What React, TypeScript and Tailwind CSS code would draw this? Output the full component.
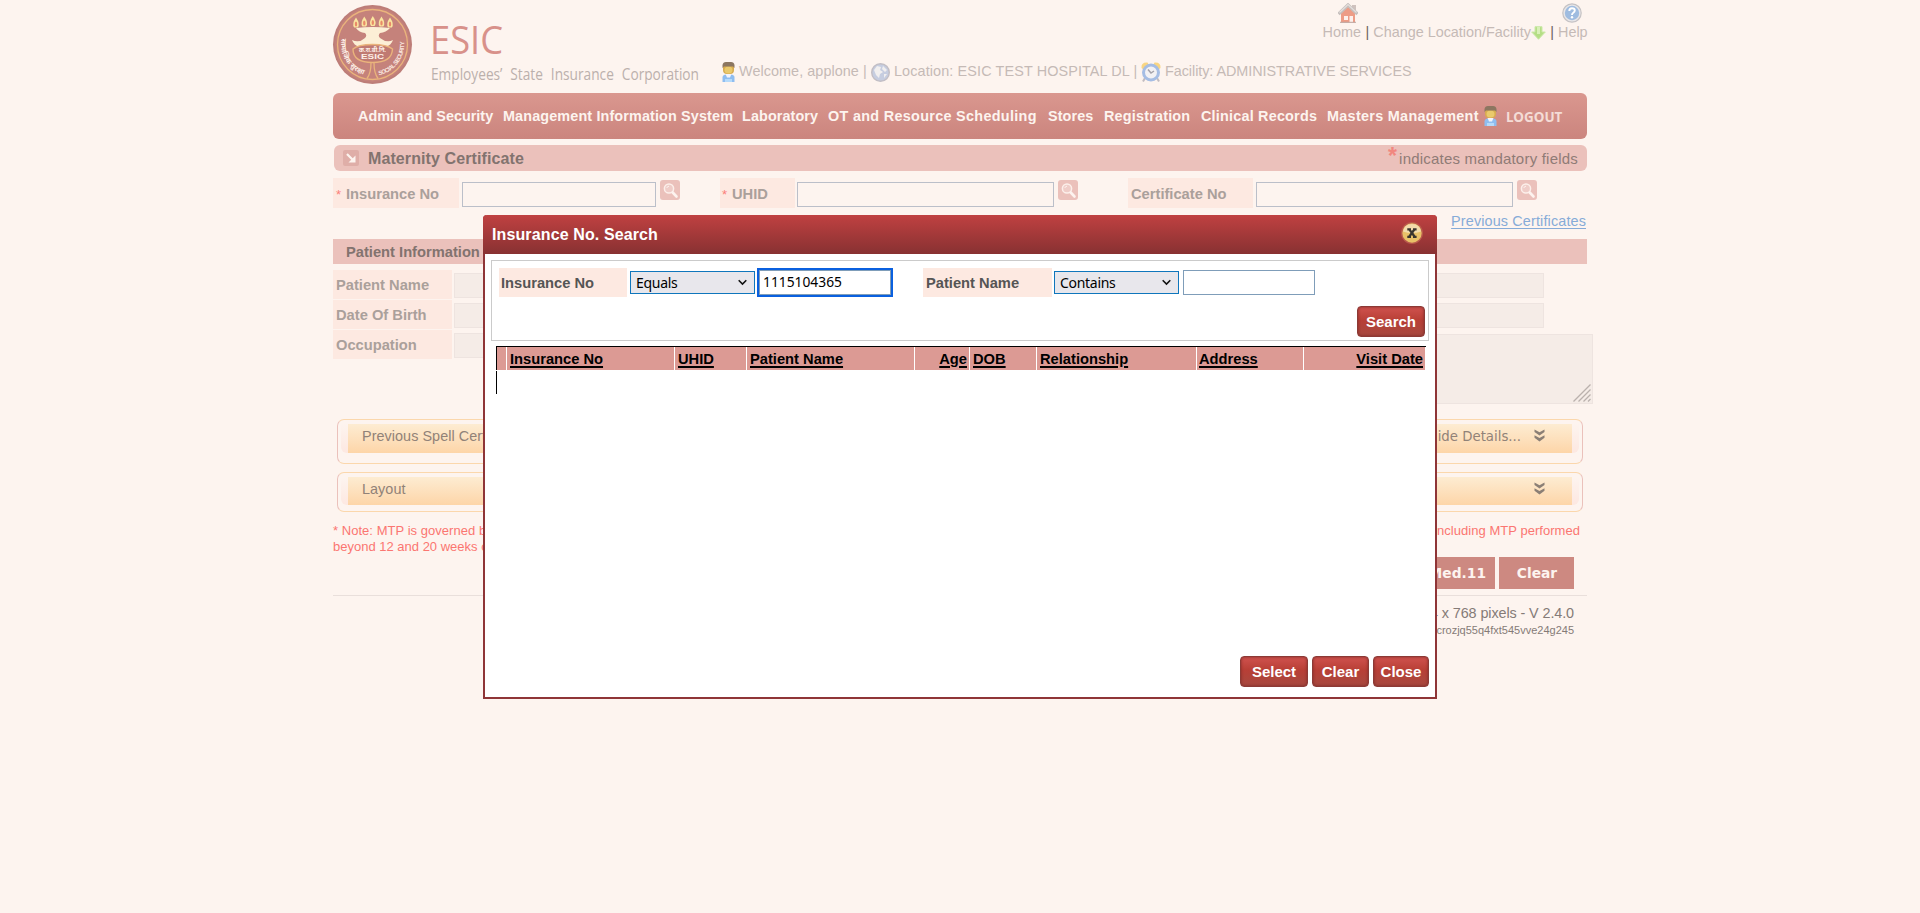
import React from "react";

const arial = "font-['Liberation_Sans',Arial,sans-serif]";
const tahoma = "font-['Noto_Sans',sans-serif]";
const verdana = "font-['DejaVu_Sans',sans-serif]";

function Logo() {
  return (
    <svg className="block h-[93px] w-[380px] shrink-0 overflow-visible" viewBox="0 0 380 93">
      <defs>
        <path id="arcLeft" d="M9 37.500 A31.300 31.300 0 0 0 35 75.500" />
        <path id="arcRight" d="M45 75.300 A31.300 31.300 0 0 0 70.500 38" />
      </defs>
      <circle cx="39.5" cy="44.5" r="39.5" fill="#bd7d78" />
      <circle cx="39.5" cy="44.5" r="37.5" fill="#c5827b" />
      <circle cx="39.5" cy="44.5" r="35" fill="none" stroke="#eab47c" strokeWidth="1.3" />
      {[23, 31.3, 39.8, 48.5, 57].map((x, i) => {
        const y = [23, 22, 21.5, 22, 23][i];
        return (
          <g key={x}>
            <path d={`M${x} ${y - 5.5} Q${x + 4.5} ${y + 1} ${x + 1.8} ${y + 4.5} H${x - 1.8} Q${x - 4.5} ${y + 1} ${x} ${y - 5.5}Z`} fill="#fae49f" />
            <ellipse cx={x} cy={y + 1} rx="1.2" ry="2.6" fill="#e98a68" />
          </g>
        );
      })}
      <path d="M23 28 Q39.5 26 57 28 Q53 32.500 47 33 Q44.500 35.500 47 38 Q54 43.500 60 40 Q58 45.500 53 46.500 Q39.5 42 26 46.500 Q21 45.500 19 40 Q26 43.500 32 38 Q34.500 35.500 32 33 Q26 32.500 23 28Z" fill="#fcefd6" />
      <path d="M20 49 Q20 62.500 39.500 62.500 Q59 62.500 59.500 49 Q54 44.500 39.5 44.500 Q25 44.500 20 49Z" fill="#c07a72" stroke="#eab47c" strokeWidth="1.4" />
      <path d="M38 63 Q38 73 34 78.500 M41 63 Q41 73 45 78.500" fill="none" stroke="#eab47c" strokeWidth="1.3" />
      <text x="26" y="52" fontSize="5.500" fontWeight="700" fill="#fdf0e8" textLength="27" lengthAdjust="spacingAndGlyphs" fontFamily="Noto Sans, sans-serif">क.रा.बी.नि.</text>
      <text x="28" y="59" fontSize="6.300" fontWeight="700" fill="#fdf0e8" textLength="23" lengthAdjust="spacingAndGlyphs" fontFamily="Liberation Sans, sans-serif">ESIC</text>
      <text fontSize="7" fontWeight="700" fill="#fdf0e8" fontFamily="Noto Sans, sans-serif">
        <textPath href="#arcLeft" startOffset="1" textLength="46">सामाजिक सुरक्षा</textPath>
      </text>
      <text fontSize="6" fontWeight="700" fill="#fbe9e0" fontFamily="Liberation Sans, sans-serif">
        <textPath href="#arcRight" startOffset="1" textLength="46">SOCIAL SECURITY</textPath>
      </text>
      <text x="97" y="54" fontSize="38" fill="#d8918a" textLength="73" lengthAdjust="spacingAndGlyphs" fontFamily="Open Sans, sans-serif">ESIC</text>
      <text x="98" y="80" fontSize="15.600" fill="#bbb0ac" textLength="268" wordSpacing="5" lengthAdjust="spacingAndGlyphs" fontFamily="Open Sans, sans-serif">Employees’ State Insurance Corporation</text>
    </svg>
  );
}

function Person() {
  return (
    <svg className="block h-5 w-[13px] shrink-0" viewBox="0 0 13 20">
      <path d="M0.500 20 V15 Q1 12.500 4 12.500 H9 Q12 12.500 12.500 15 V20Z" fill="#8fbdf0" />
      <path d="M3.500 12 H9.500 L8 15.500 H5Z" fill="#f3f3fa" />
      <path d="M3 17 H10 V20 H3Z" fill="#b5dafa" />
      <rect x="1" y="1" width="11" height="11" rx="4" fill="#d8ab4f" />
      <ellipse cx="6.500" cy="8" rx="4" ry="3.500" fill="#eac96c" />
      <path d="M0.500 6 V3 Q1 0 4 0 H9 Q12 0 12.500 3 V6 L11 4.500 H2Z" fill="#8c7660" />
    </svg>
  );
}

function Globe() {
  return (
    <svg className="block size-[19px] shrink-0" viewBox="0 0 19 19">
      <circle cx="9.500" cy="9.500" r="8.800" fill="#c6cde0" stroke="#c2bec4" strokeWidth="1.400" />
      <path d="M3 7 L6 3 L10 4 L9 7 L12 9 L9 11 L8 15 L5 12Z M12 3 L16 7 L14 9 L11 6Z M13 11 L16 11 L13 15Z" fill="#f1efef" />
    </svg>
  );
}

function Clock() {
  return (
    <svg className="block size-5 shrink-0" viewBox="0 0 20 20">
      <path d="M0.500 6 Q0 0 6.500 0.500 L8 3 L3 8Z M19.500 6 Q20 0 13.500 0.500 L12 3 L17 8Z" fill="#f8d583" />
      <path d="M4 16 L2 19.500 M16 16 L18 19.500" stroke="#c2bcc0" strokeWidth="2" />
      <circle cx="10" cy="10.500" r="7.500" fill="#f2f1f4" stroke="#a5bde4" strokeWidth="3" />
      <path d="M7 7.500 L10 11 L13 9" fill="none" stroke="#a4a2aa" strokeWidth="1.500" />
    </svg>
  );
}

function House() {
  return (
    <svg className="block h-5 w-5" viewBox="0 0 20 20">
      <rect x="14" y="2" width="4" height="7" fill="#cfc2be" />
      <path d="M3 9.500 L10 3.500 L17 9.500 V19.500 H3Z" fill="#ed9c86" />
      <path d="M0.500 11 L10 2 L19.500 11" fill="none" stroke="#c6bfbd" strokeWidth="3.400" />
      <path d="M1.500 9.500 L10 1.500 L18.500 9.500" fill="none" stroke="#e4dfdd" strokeWidth="1.200" />
      <rect x="6" y="13" width="4" height="4" fill="#fdf0ec" />
      <rect x="11.500" y="13" width="3.500" height="6.500" fill="#fdf0ec" />
      <path d="M2 19.300 H18" stroke="#bba6a0" strokeWidth="1" />
    </svg>
  );
}

function HelpIcon() {
  return (
    <svg className="block size-5" viewBox="0 0 20 20">
      <circle cx="10" cy="10" r="9.200" fill="#e8e6e8" stroke="#c5c2c4" strokeWidth="1.200" />
      <circle cx="10" cy="10" r="7.200" fill="#9fbce0" />
      <path d="M7.300 8 Q7.300 5.300 10 5.300 Q12.800 5.300 12.800 7.600 Q12.800 9 11 10 Q10 10.600 10 12" fill="none" stroke="#fff" strokeWidth="1.900" />
      <circle cx="10" cy="14.200" r="1.200" fill="#fff" />
    </svg>
  );
}

function Magnifier() {
  return (
    <span className="flex size-5 shrink-0 items-center justify-center rounded-[3px] bg-[#ebc1bb]">
      <svg className="block size-5" viewBox="0 0 20 20">
        <circle cx="9" cy="8.500" r="4.600" fill="#efcdc8" stroke="#fcefea" strokeWidth="1.500" />
        <path d="M6.800 8 Q7.200 6.300 9 6.200" stroke="#fdf3ef" strokeWidth="1" fill="none" />
        <path d="M12.700 12.500 L16.500 16.500" stroke="#fdf3ef" strokeWidth="2.600" strokeLinecap="round" />
      </svg>
    </span>
  );
}

function Chevrons() {
  return (
    <svg className="block h-[13px] w-[11px]" viewBox="0 0 11 13">
      <path d="M0.500 0.500 L5.500 3.300 L10.500 0.500 V3 L5.500 6.600 L0.500 3Z M0.500 6.300 L5.500 9 L10.500 6.300 V8.800 L5.500 12.400 L0.500 8.800Z" fill="#8b7f75" />
    </svg>
  );
}

const nav: [string, string][] = [
  ["Admin and Security", "w-[145px]"],
  ["Management Information System", "w-[239px] tracking-[0.130px]"],
  ["Laboratory", "w-[86px] tracking-[0.100px]"],
  ["OT and Resource Scheduling", "w-[220px] tracking-[0.310px]"],
  ["Stores", "w-[56px] tracking-[0.100px]"],
  ["Registration", "w-[97px] tracking-[0.200px]"],
  ["Clinical Records", "w-[126px] tracking-[0.210px]"],
  ["Masters Management", "w-[157px] tracking-[0.300px]"],
];

function SoftInput({ className }: { className: string }) {
  return <div className={`box-border h-[25px] shrink-0 border border-[#bbbfc9] ${className}`} />;
}

const label = "flex shrink-0 bg-[#fde9e1] text-[14.7px] font-bold leading-[17px] text-[#aaa09b]";

function Panel({ title, detail, className, inner }: { title: string; detail?: string; className: string; inner: string }) {
  return (
    <div className={`ml-1 flex w-[1246px] items-start rounded-[7px] border border-x-[#ebc1bb] border-y-[#fbd7ac] px-[3px] pt-1 ${className}`}>
      <div className={`w-[7px] rounded-bl-md bg-gradient-to-b from-[#fdf4ef] to-[#fde8e1] ${inner}`} />
      <div className={`flex flex-1 justify-between bg-gradient-to-b from-[#fdecd2] to-[#fdd5a8] pl-[14px] pr-[27px] text-[14.4px] leading-[17px] text-[#918278] ${inner}`}>
        <span className="pt-[4px] tracking-[0.050px]">{title}</span>
        <span className="flex pt-[5px]">
          {detail && <span className={`-mt-px mr-[13px] text-[13.300px] ${verdana}`}>{detail}</span>}
          <Chevrons />
        </span>
      </div>
      <div className={`w-[7px] rounded-br-md bg-gradient-to-b from-[#fdf4ef] to-[#fde8e1] ${inner}`} />
    </div>
  );
}

function RedButton({ children, className }: { children: string; className: string }) {
  return (
    <button
      className={`flex h-[31px] items-center justify-center rounded-[4px] border border-[#8c3a36] bg-gradient-to-b from-[#d0524e] via-[#b83f36] via-45% to-[#a6483f] pt-0.5 text-[15px] font-bold text-white shadow-[inset_0_0_3px_#7d2a26] ${className}`}
    >
      {children}
    </button>
  );
}

function Select({ value }: { value: string }) {
  return (
    <div className={`flex h-[23px] w-[125px] shrink-0 items-center justify-between border border-[#0f76bc] bg-[#e8e7ec] pl-[5px] pr-[7px] text-[14px] tracking-[-0.300px] text-black ${tahoma}`}>
      <span>{value}</span>
      <svg className="block h-[7px] w-[9px]" viewBox="0 0 9 7">
        <path d="M0.700 1.200 L4.500 5 L8.300 1.200" fill="none" stroke="#111" strokeWidth="1.600" />
      </svg>
    </div>
  );
}

const columns: [string, string][] = [
  ["Insurance No", "w-[167px] justify-start pl-[3px]"],
  ["UHID", "w-[71px] justify-start pl-[3px]"],
  ["Patient Name", "w-[167px] justify-start pl-[3px]"],
  ["Age", "w-[54px] justify-end"],
  ["DOB", "w-[66px] justify-start pl-[3px]"],
  ["Relationship", "w-[159px] justify-start pl-[3px]"],
  ["Address", "w-[106px] justify-start pl-[2px]"],
  ["Visit Date", "w-[121px] justify-end"],
];

function SearchDialog() {
  return (
    <div className="absolute left-[483px] top-[215px] flex h-[484px] w-[954px] flex-col rounded-t-[4px] border-2 border-t-0 border-[#8f3537] bg-white">
      <div className="-mx-0.5 flex h-[39px] shrink-0 justify-between rounded-t-[4px] bg-gradient-to-b from-[#c04141] to-[#883132] pl-[10px] pr-[14px] text-white">
        <h2 className="-ml-px pt-[11px] text-[16px] font-bold leading-[18px] tracking-[0.120px]">Insurance No. Search</h2>
        <svg className="mt-[7px] block size-[22px]" viewBox="0 0 22 22">
          <circle cx="11" cy="11" r="11" fill="#b95a4c" />
          <circle cx="11" cy="11" r="9.700" fill="#e9c168" />
          <path d="M2 9.500 Q3 2 11 2 Q19 2 20 9.500 Q11 12.500 2 9.500Z" fill="#f3dcab" />
          <path d="M6.300 7.300 H10 M12 7.300 H15.600 M6.300 14.900 H10 M12 14.900 H15.600 M8 7 L13.900 15 M13.700 7 L8 15" stroke="#3a362f" strokeWidth="2.200" fill="none" />
        </svg>
      </div>
      <div className="mx-1.5 mt-1.5 flex h-[81px] flex-col border border-[#cbcbcb]">
        <div className="flex h-[36px] items-center pl-[7px] pt-[6px]">
          <label className="h-[29px] w-32 bg-[#fde9e1] pl-0.5 pt-[7px] text-[14.700px] font-bold leading-[17px] text-[#555]">Insurance No</label>
          <span className="ml-[3px] pt-px"><Select value="Equals" /></span>
          <div className={`ml-[4px] mt-px flex h-[25px] w-[132px] items-center border border-[#7f9db9] pl-[3px] text-[13.800px] text-black outline-2 outline-[#0a60df] ${tahoma}`}>1115104365</div>
          <label className="ml-[32px] h-[29px] w-[129px] bg-[#fde9e1] pl-[3px] pt-[7px] text-[14.700px] font-bold leading-[17px] text-[#555]">Patient Name</label>
          <span className="ml-0.5 pt-px"><Select value="Contains" /></span>
          <div className="ml-1 mt-px h-[25px] w-[132px] border border-[#7f9db9]" />
        </div>
        <div className="flex justify-end pr-[3px] pt-[9px]">
          <RedButton className="w-[68px]">Search</RedButton>
        </div>
      </div>
      <div className="ml-[11px] mt-[5px] flex h-6 w-[930px] gap-px border-l border-t border-black text-[14.700px] font-bold leading-[17px] text-black">
        <div className="w-[9px] bg-[#dc9a94]" />
        {columns.map(([name, cls]) => (
          <div key={name} className={`flex shrink-0 bg-[#dc9a94] pr-0.5 pt-[4px] ${cls}`}>
            <span className="whitespace-nowrap underline decoration-2 underline-offset-[1.500px]">{name}</span>
          </div>
        ))}
      </div>
      <div className="ml-[11px] mt-px h-[23px] border-l border-black" />
      <div className="mt-auto flex justify-end gap-1 pb-[10px] pr-1.5">
        <RedButton className="w-[68px]">Select</RedButton>
        <RedButton className="w-[57px]">Clear</RedButton>
        <RedButton className="w-[56px]">Close</RedButton>
      </div>
    </div>
  );
}

export default function App() {
  return (
    <div className={`relative h-[913px] w-[1920px] overflow-hidden bg-[#fdf4ef] ${arial}`}>
      <div className="mx-auto flex w-[1254px] flex-col">
        <header className="flex h-[93px] text-[14.400px] leading-[17px] text-[#c5bab6]">
          <Logo />
          <div className="flex flex-1 flex-col">
            <div className="flex h-[62px] justify-end">
              <div className="flex w-[44px] flex-col pt-[3px]">
                <span className="ml-[16px]"><House /></span>
                <span className="ml-[1px] mt-px">Home</span>
              </div>
              <div className="flex h-[41px] items-end text-[#6d6461]">|</div>
              <div className="ml-[4px] flex h-[41px] w-[175px] items-end">
                <span className="whitespace-nowrap">Change Location/Facility</span>
                <svg className="mb-px block h-[14px] w-[15px] shrink-0" viewBox="0 0 15 14">
                  <path d="M4 0.700 H11 V6 H14.300 L7.500 13.300 L0.700 6 H4Z" fill="#b5de85" stroke="#cbe8a8" strokeWidth="1" />
                  <path d="M6 1 H9 V8 H6Z" fill="#d9f0b8" />
                </svg>
              </div>
              <div className="ml-[2px] flex h-[41px] items-end text-[#6d6461]">|</div>
              <div className="ml-[4px] flex w-[29px] flex-col pt-[3px]">
                <span className="ml-[4px]"><HelpIcon /></span>
                <span className="mt-px">Help</span>
              </div>
            </div>
            <div className="flex items-start whitespace-nowrap pl-[9px]">
              <Person />
              <span className="ml-[4px] w-[132px] pt-px tracking-[0.060px]">Welcome, applone |</span>
              <span className="pt-px"><Globe /></span>
              <span className="ml-[4px] w-[247px] pt-px tracking-[0.120px]">Location: ESIC TEST HOSPITAL DL |</span>
              <Clock />
              <span className="ml-[4px] pt-px tracking-[-0.050px]">Facility: ADMINISTRATIVE SERVICES</span>
            </div>
          </div>
        </header>

        <nav className="flex h-[46px] items-center rounded-[6px] bg-gradient-to-b from-[#da978f] to-[#cb857e] pl-[25px] text-[14.400px] font-bold text-[#fdf4ef]">
          {nav.map(([name, w]) => (
            <span key={name} className={`shrink-0 whitespace-nowrap pt-px ${w}`}>{name}</span>
          ))}
          <Person />
          <span className={`ml-[9px] pt-0.5 text-[13.500px] font-bold leading-[16px] text-[#f4dcd6] ${tahoma}`}>LOGOUT</span>
        </nav>

        <div className="ml-px mt-[6px] flex h-[26px] items-center justify-between rounded-[6px] bg-[#ebc1bb] pl-[9px] pr-[9px]">
          <div className="flex items-center">
            <svg className="block size-4" viewBox="0 0 16 16">
              <rect width="16" height="16" rx="2" fill="#dfaea8" />
              <path d="M4 4 L9.500 9.500" stroke="#fdf4ef" strokeWidth="2.200" />
              <path d="M12.500 5.500 V12.500 H5.500Z" fill="#fdf4ef" />
            </svg>
            <h1 className="ml-[9px] pt-px text-[16px] font-bold leading-[18px] tracking-[0.100px] text-[#82736f]">Maternity Certificate</h1>
          </div>
          <div className="flex pt-px text-[15px] leading-[18px] tracking-[0.210px] text-[#8f7b76]">
            <span className="-mt-[3px] mr-[2px] text-[23px] font-bold text-[#f1877f]">*</span>
            <span>indicates mandatory fields</span>
          </div>
        </div>

        <div className="mt-[7px] flex h-[30px]">
          <div className={`${label} w-[126px] pl-[3px] pt-[8px]`}>
            <span className="w-[10px] text-[13px] font-normal text-[#fb7f79]">*</span>Insurance No
          </div>
          <div className="ml-[3px] flex w-[258px] pt-[4px]">
            <SoftInput className="w-[194px]" />
            <span className="-mt-[2px] ml-[4px]"><Magnifier /></span>
          </div>
          <div className={`${label} w-[75px] pl-[2px] pt-[8px]`}>
            <span className="w-[10px] text-[13px] font-normal text-[#fb7f79]">*</span>UHID
          </div>
          <div className="ml-[2px] flex w-[331px] pt-[4px]">
            <SoftInput className="w-[257px]" />
            <span className="-mt-[2px] ml-[4px]"><Magnifier /></span>
          </div>
          <div className={`${label} w-[125px] pl-[3px] pt-[8px]`}>Certificate No</div>
          <div className="ml-[3px] flex pt-[4px]">
            <SoftInput className="w-[257px]" />
            <span className="-mt-[2px] ml-[4px]"><Magnifier /></span>
          </div>
        </div>

        <div className="flex h-[31px] justify-end pr-px pt-[5px] text-[14.400px] leading-[17px] tracking-[0.140px] text-[#86abd8]">
          <a className="underline underline-offset-2">Previous Certificates</a>
        </div>

        <div className="flex h-[25px] items-center bg-[#ebc1bb] pl-[13px] pt-px text-[14.700px] font-bold text-[#82736f]">Patient Information</div>

        <div className="mt-[6px] flex h-[149px] justify-between">
          <div className="flex flex-col gap-px">
            {["Patient Name", "Date Of Birth", "Occupation"].map((name) => (
              <div key={name} className="flex h-[29px]">
                <div className={`${label} w-[119px] pl-[3px] pt-[7px]`}>{name}</div>
                <div className="ml-0.5 mt-[3px] h-[25px] w-40 border border-[#eee4e0] bg-[#f5ece7]" />
              </div>
            ))}
          </div>
          <div className="-mr-[6px] flex flex-col pt-[3px]">
            <div className="h-[25px] w-[220px] border border-[#eee4e0] bg-[#f5ece7]" />
            <div className="mt-[5px] h-[25px] w-[220px] border border-[#eee4e0] bg-[#f5ece7]" />
            <div className="mt-[6px] flex h-[70px] w-[269px] items-end justify-end border border-[#eee4e0] bg-[#f5ece7] p-px">
              <svg className="block size-[18px]" viewBox="0 0 18 18">
                <path d="M0.500 17.500 L17.500 0.500 M5.500 17.500 L17.500 5.500 M10.500 17.500 L17.500 10.500 M15 17.500 L17.500 15" stroke="#bab1ad" strokeWidth="1.300" />
              </svg>
            </div>
          </div>
        </div>

        <Panel title="Previous Spell Certificates" detail="Show/Hide Details..." className="h-[45px]" inner="h-[29px]" />
        <Panel title="Layout" className="mt-2 h-[40px]" inner="h-[28px]" />

        <div className="mt-[11px] text-[13px] leading-[16px] text-[#fb7671]">
          <div className="flex justify-between pr-[7px] tracking-[0.040px]">
            <span>* Note: MTP is governed by</span>
            <span>including MTP performed</span>
          </div>
          <div>beyond 12 and 20 weeks of</div>
        </div>

        <div className={`mt-[2px] flex h-8 justify-end gap-1 pr-[13px] text-[13.800px] font-bold text-[#fdf4ef] ${verdana}`}>
          <div className="flex w-[90px] items-center justify-end bg-[#cd8981] pr-[9px]">Med.11</div>
          <div className="flex w-[75px] items-center justify-center bg-[#cd8981] pl-px">Clear</div>
        </div>
        <footer className="mt-[6px] border-t border-[#e9dfdb] pr-[13px] pt-[9px] text-right text-[#857b77]">
          <div className="text-[14.400px] leading-[17px] tracking-[-0.100px]">1024 x 768 pixels - V 2.4.0</div>
          <div className="text-[11px] leading-[17px]">crozjq55q4fxt545vve24g245</div>
        </footer>
      </div>
      <SearchDialog />
    </div>
  );
}
